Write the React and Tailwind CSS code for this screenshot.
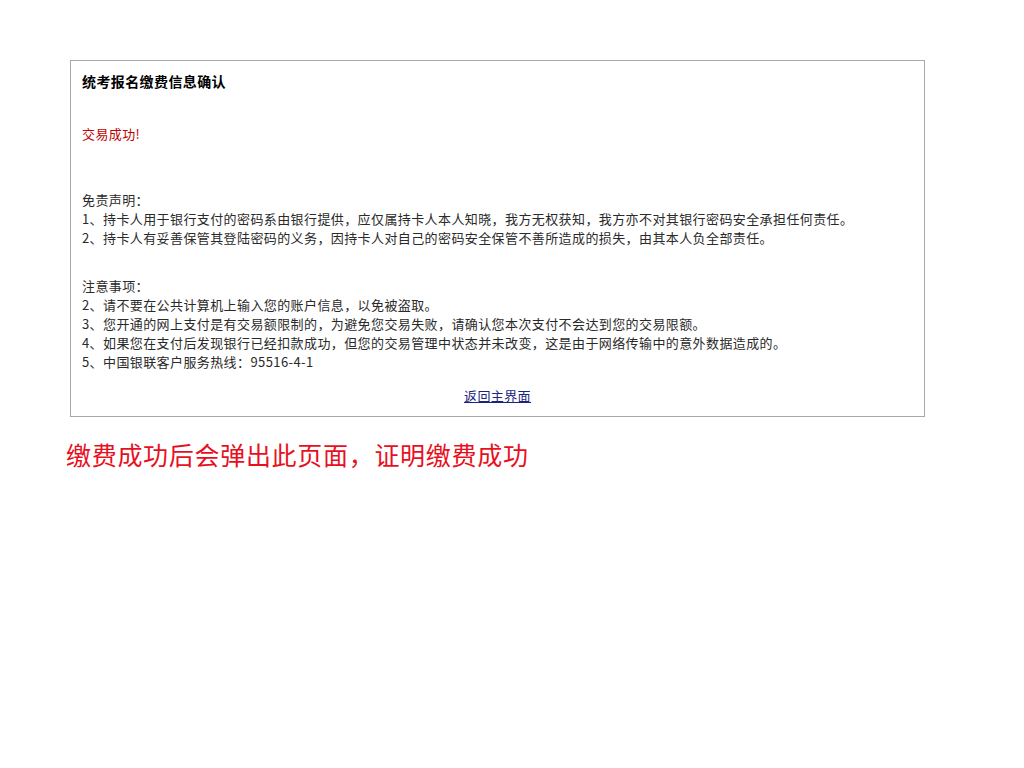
// App.jsx — 缴费成功确认页
const cjk = { fontFamily: '"Noto Sans CJK SC", "Noto Sans", sans-serif' };

const disclaimers = [
  '1、持卡人用于银行支付的密码系由银行提供，应仅属持卡人本人知晓，我方无权获知，我方亦不对其银行密码安全承担任何责任。',
  '2、持卡人有妥善保管其登陆密码的义务，因持卡人对自己的密码安全保管不善所造成的损失，由其本人负全部责任。',
];

const notes = [
  '2、请不要在公共计算机上输入您的账户信息，以免被盗取。',
  '3、您开通的网上支付是有交易额限制的，为避免您交易失败，请确认您本次支付不会达到您的交易限额。',
  '4、如果您在支付后发现银行已经扣款成功，但您的交易管理中状态并未改变，这是由于网络传输中的意外数据造成的。',
  '5、中国银联客户服务热线：95516-4-1',
];

export default function App() {
  return (
    <div className="min-h-[768px] w-[1024px] bg-white pt-[60px]" style={cjk}>
      <div className="ml-[70px] w-[855px] border border-[#a8a8a8] px-[11px] pt-[11px] pb-[11px] text-[13px] leading-[19px] tracking-[0.4px] text-[#2a2a2a]">
        <div className="text-[14px] font-bold text-black">统考报名缴费信息确认</div>

        <div className="mt-[33px] text-[#c00000]">交易成功!</div>

        <div className="mt-[47px]">
          <div>免责声明：</div>
          {disclaimers.map((line) => (
            <div key={line}>{line}</div>
          ))}
        </div>

        <div className="mt-[29px]">
          <div>注意事项：</div>
          {notes.map((line) => (
            <div key={line}>{line}</div>
          ))}
        </div>

        <div className="mt-[15px] text-center">
          <a href="#" className="text-[#1a237e] underline">
            返回主界面
          </a>
        </div>
      </div>

      <div className="ml-[66px] mt-[22px] text-[25px] leading-[30px] tracking-[0.7px] text-[#e8101e]">
        缴费成功后会弹出此页面，证明缴费成功
      </div>
    </div>
  );
}
